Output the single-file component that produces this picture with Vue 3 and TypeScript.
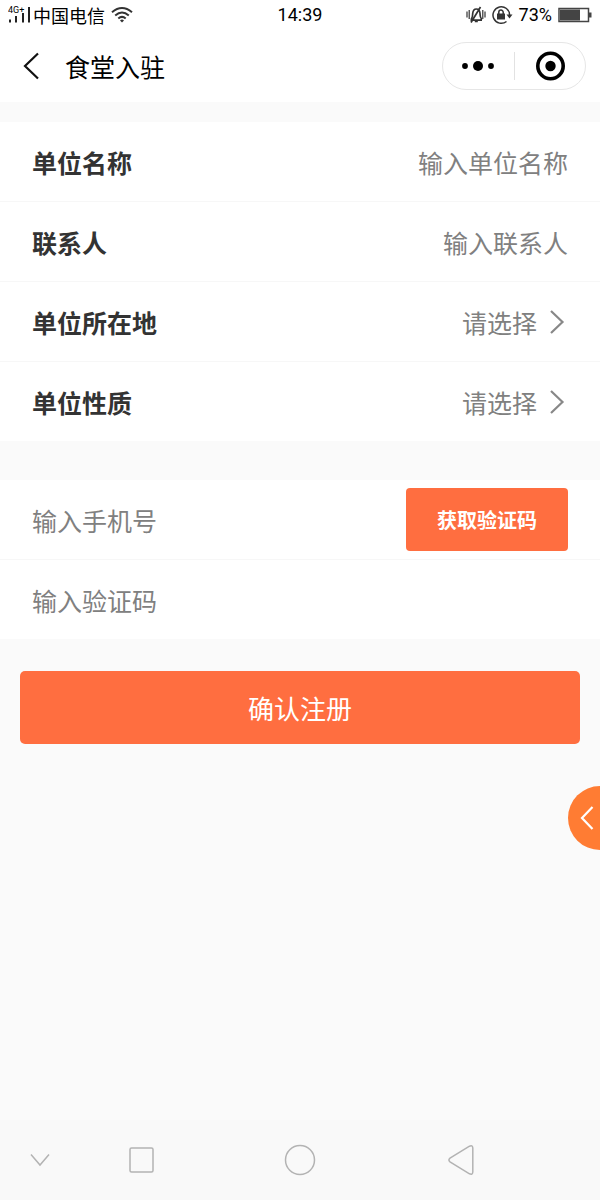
<script setup lang="ts">
import { reactive } from 'vue'

interface TextField {
  key: 'name' | 'contact'
  label: string
  placeholder: string
}

interface PickField {
  key: 'area' | 'kind'
  label: string
}

const textFields: TextField[] = [
  { key: 'name', label: '单位名称', placeholder: '输入单位名称' },
  { key: 'contact', label: '联系人', placeholder: '输入联系人' },
]

const pickFields: PickField[] = [
  { key: 'area', label: '单位所在地' },
  { key: 'kind', label: '单位性质' },
]

const form = reactive({ name: '', contact: '', area: '', kind: '', phone: '', code: '' })
</script>

<template>
  <div class="page">
    <div class="status">
      <div class="status-side">
        <svg class="signal" width="24" height="20" viewBox="0 0 24 20">
          <text x="0" y="8" class="signal-text">4G+</text>
          <path d="M1 14.500h2v3h-2zM7 11h2v6.500h-2zM14 8h2v9.500h-2zM20 2h2v15.500h-2z" fill="#222" />
        </svg>
        <span class="carrier">中国电信</span>
        <svg class="wifi" width="22" height="18" viewBox="0 0 22 18" fill="none" stroke="#333" stroke-width="2">
          <path d="M1 6.200Q11 -2.200 21 6.200M4.200 9.400Q11 3.600 17.800 9.400M7.300 12.500Q11 9.300 14.700 12.500" />
          <path d="M9 14.400Q11 12.800 13 14.400L11 16.500Z" fill="#333" stroke="none" />
        </svg>
      </div>
      <span class="time">14:39</span>
      <div class="status-side end">
        <svg width="20" height="18" viewBox="0 0 20 18" fill="none" stroke="#333" stroke-width="1.700">
          <path d="M4.500 14.200h11.500M5.500 14v-1.500c1.200-1.200 1-3 1.200-5C7 4.600 8.200 3 10.300 3s3.500 1.600 3.700 4.500c.2 2 0 3.800 1.300 5v1.500M8.800 15.500h3M14.500 1L5 16.500" />
          <path d="M1 5.500v6M3.200 4v9M16.800 4v9M19 5.500v6" stroke-width="1.200" />
        </svg>
        <svg width="21" height="20" viewBox="0 0 21 20" fill="none" stroke="#333" stroke-width="1.500">
          <path d="M14.500 16.500A8.300 8.300 0 1 1 17.600 10" />
          <path d="M14.500 9.500h6l-3 4z" fill="#333" stroke="none" />
          <path d="M5 8.500h8v6h-8z" fill="#333" stroke="none" />
          <path d="M6.800 9V7.300a2.200 2.200 0 0 1 4.400 0V9" />
        </svg>
        <span class="percent">73%</span>
        <svg width="34" height="16" viewBox="0 0 34 16">
          <rect x="1" y="1.500" width="29.500" height="13" fill="none" stroke="#444" stroke-width="1.500" />
          <rect x="2" y="2.500" width="20" height="11" fill="#444" />
          <rect x="31" y="5.500" width="2.500" height="5" fill="#444" />
        </svg>
      </div>
    </div>

    <header class="bar">
      <button class="plain back" type="button" aria-label="返回">
        <svg width="16" height="28" viewBox="0 0 16 28" fill="none" stroke="#111" stroke-width="2.200">
          <path d="M15 1.500L2 14L15 26.500" />
        </svg>
      </button>
      <h1 class="title">食堂入驻</h1>
      <div class="capsule">
        <button class="plain half" type="button" aria-label="更多">
          <svg width="34" height="12" viewBox="0 0 34 12">
            <circle cx="4" cy="6" r="2.900" /><circle cx="17" cy="6" r="5" /><circle cx="30" cy="6" r="2.900" />
          </svg>
        </button>
        <span class="split"></span>
        <button class="plain half" type="button" aria-label="关闭">
          <svg width="30" height="30" viewBox="0 0 30 30">
            <circle cx="15.500" cy="15" r="12.700" fill="none" stroke="#000" stroke-width="3.600" />
            <circle cx="15.500" cy="15" r="5.200" />
          </svg>
        </button>
      </div>
    </header>

    <form class="form" @submit.prevent>
      <section class="card">
        <div v-for="f in textFields" :key="f.key" class="row">
          <label class="label" :for="f.key">{{ f.label }}</label>
          <input :id="f.key" v-model="form[f.key]" class="input right" type="text" :placeholder="f.placeholder" />
        </div>
        <div v-for="f in pickFields" :key="f.key" class="row">
          <label class="label" :for="f.key">{{ f.label }}</label>
          <select :id="f.key" v-model="form[f.key]" class="select">
            <option value="">请选择</option>
          </select>
          <svg class="chevron" width="24" height="26" viewBox="0 0 24 26" fill="none" stroke="#888" stroke-width="2.200">
            <path d="M7 2L18.500 13L7 24" />
          </svg>
        </div>
      </section>

      <section class="card">
        <div class="row">
          <input v-model="form.phone" class="input" type="tel" aria-label="手机号" placeholder="输入手机号" />
          <button class="code" type="button">获取验证码</button>
        </div>
        <div class="row">
          <input v-model="form.code" class="input" type="text" aria-label="验证码" placeholder="输入验证码" />
        </div>
      </section>

      <button class="submit" type="submit">确认注册</button>
    </form>

    <button class="plain drawer" type="button" aria-label="展开">
      <svg width="14" height="24" viewBox="0 0 14 24" fill="none" stroke="#fff" stroke-width="2.200">
        <path d="M12.500 1L2 12L12.500 23" />
      </svg>
    </button>

    <nav class="nav">
      <button class="plain" type="button" aria-label="收起">
        <svg width="20" height="14" viewBox="0 0 20 14"><path d="M1 1.500L10 12L19 1.500" /></svg>
      </button>
      <button class="plain" type="button" aria-label="最近任务">
        <svg width="28" height="28" viewBox="0 0 28 28"><rect x="4" y="2" width="23" height="24" rx="1.500" /></svg>
      </button>
      <button class="plain" type="button" aria-label="主页">
        <svg width="32" height="32" viewBox="0 0 32 32"><circle cx="16" cy="16" r="14.500" /></svg>
      </button>
      <button class="plain" type="button" aria-label="后退">
        <svg width="28" height="32" viewBox="0 0 28 32">
          <path d="M23.500 2.200Q26.500 .8 26.800 4V28Q26.500 31.200 23.500 29.800L4 17.800Q1.800 16 4 14.200Z" />
        </svg>
      </button>
    </nav>
  </div>
</template>

<style>
body {
  margin: 0;
  background: #fafafa;
}
</style>

<style scoped>
.page {
  position: relative;
  display: flex;
  flex-direction: column;
  min-height: 100vh;
  background: #fafafa;
  color: #000;
  font-family: "Noto Sans CJK SC", sans-serif;
}

.page svg {
  display: block;
  flex: none;
}

button,
input,
select {
  margin: 0;
  padding: 0;
  border: 0;
  font-family: inherit;
}

.plain {
  display: flex;
  align-items: center;
  justify-content: center;
  background: none;
}

.status {
  display: grid;
  grid-template-columns: 1fr auto 1fr;
  align-items: center;
  height: 30px;
  padding: 0 8px;
  background: #fff;
  font-size: 18px;
  line-height: 30px;
}

.status-side {
  display: flex;
  align-items: center;
}

.end {
  justify-content: flex-end;
  gap: 6px;
}

.time,
.percent,
.signal-text {
  font-family: Roboto, sans-serif;
}

.signal-text {
  font-size: 9px;
}

.carrier {
  margin: 0 6px 0 1px;
}

.bar {
  display: flex;
  align-items: center;
  height: 72px;
  padding: 0 14px 0 23px;
  background: #fff;
}

.title {
  flex: 1;
  margin: 0 0 0 26px;
  font-size: 25px;
  font-weight: 400;
  line-height: 36px;
}

.capsule {
  display: flex;
  align-items: center;
  box-sizing: border-box;
  width: 144px;
  height: 48px;
  border: 1px solid #e6e6e6;
  border-radius: 24px;
}

.half {
  flex: 1;
  height: 100%;
}

.split {
  width: 1px;
  height: 28px;
  background: #e2e2e2;
}

.form {
  display: flex;
  flex-direction: column;
}

.card {
  margin-top: 20px;
  background: #fff;
}

.card + .card {
  margin-top: 39px;
}

.row {
  display: flex;
  align-items: center;
  height: 79px;
  padding: 0 32px;
}

.row + .row {
  border-top: 1px solid #f7f7f7;
}

.label {
  flex: none;
  color: #333;
  font-size: 25px;
  font-weight: 700;
  line-height: 36px;
}

.input {
  flex: 1;
  min-width: 0;
  height: 48px;
  background: none;
  color: #333;
  font-size: 25px;
  outline: none;
}

.input::placeholder {
  color: #808080;
  opacity: 1;
}

.right {
  text-align: right;
}

.select {
  flex: 1;
  min-width: 0;
  height: 48px;
  appearance: none;
  background: none;
  color: #808080;
  font-size: 25px;
  text-align: right;
  text-align-last: right;
  outline: none;
}

.chevron {
  margin-left: 7px;
}

.code {
  width: 162px;
  height: 63px;
  border-radius: 4px;
  background: #ff6e40;
  color: #fff;
  font-size: 20px;
  font-weight: 700;
}

.submit {
  height: 73px;
  margin: 32px 20px;
  border-radius: 5px;
  background: #ff6e40;
  color: #fff;
  font-size: 26px;
}

.drawer {
  position: absolute;
  top: 786px;
  right: 0;
  width: 32px;
  height: 64px;
  padding-left: 5px;
  border-radius: 32px 0 0 32px;
  background: #ff7c33;
}

.nav {
  display: grid;
  grid-template-columns: 2fr 3fr 5fr 3fr 2fr;
  align-items: center;
  height: 80px;
  margin-top: auto;
  background: #f9f9f9;
}

.nav svg {
  fill: none;
  stroke: #b3b3b3;
  stroke-width: 1.5;
}
</style>
